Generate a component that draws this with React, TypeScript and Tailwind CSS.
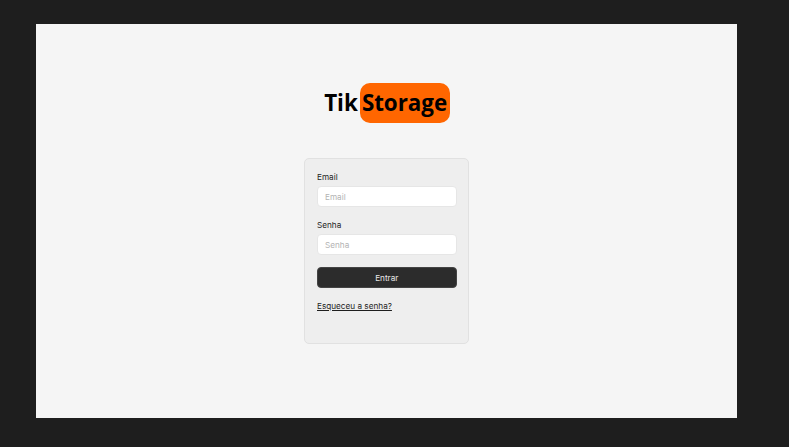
import React from "react";

function Field({ label, type }: { label: string; type: string }) {
  return (
    <label className="flex flex-col">
      <span className="h-3 text-[8.2px] leading-3">{label}</span>
      <input
        type={type}
        placeholder={label}
        className="mt-[3px] h-[21px] w-full rounded-[4px] border border-[#e6e6e6] bg-white px-[7px] text-[8.2px] leading-3 outline-none placeholder:text-[#b3b3b3]"
      />
    </label>
  );
}

export default function App() {
  return (
    <div className="h-[447px] w-[789px] overflow-hidden bg-[#1e1e1e] pt-6 pl-9 font-['Inter',sans-serif] text-[#1e1e1e]">
      <main className="flex h-[394px] w-[701px] flex-col items-center bg-[#f5f5f5] pt-[59px]">
        <h1 className="flex h-10 w-[126px] items-center justify-between pl-[0.7px] font-['Open_Sans',sans-serif] text-[22.4px] leading-10 font-bold tracking-[-0.05px] text-black">
          <span className="h-10">Tik</span>
          <span className="h-10 w-[90px] rounded-[10px] bg-[#ff6600] text-center">Storage</span>
        </h1>
        <form className="mt-[35px] flex h-[186px] w-[165px] flex-col rounded-[5px] border border-[#e1e1e1] bg-[#eeeeee] pt-3 pr-[11.5px] pl-3">
          <Field label="Email" type="email" />
          <div className="mt-3">
            <Field label="Senha" type="password" />
          </div>
          <button type="button" className="mt-3 h-[21px] shrink-0 rounded-[4px] border border-[#444444] bg-[#2c2c2c] text-[8.2px] leading-3 text-[#e8e8e8]">
            Entrar
          </button>
          <a href="#" className="mt-3 self-start text-[8.2px] leading-3 underline">
            Esqueceu a senha?
          </a>
        </form>
      </main>
    </div>
  );
}
